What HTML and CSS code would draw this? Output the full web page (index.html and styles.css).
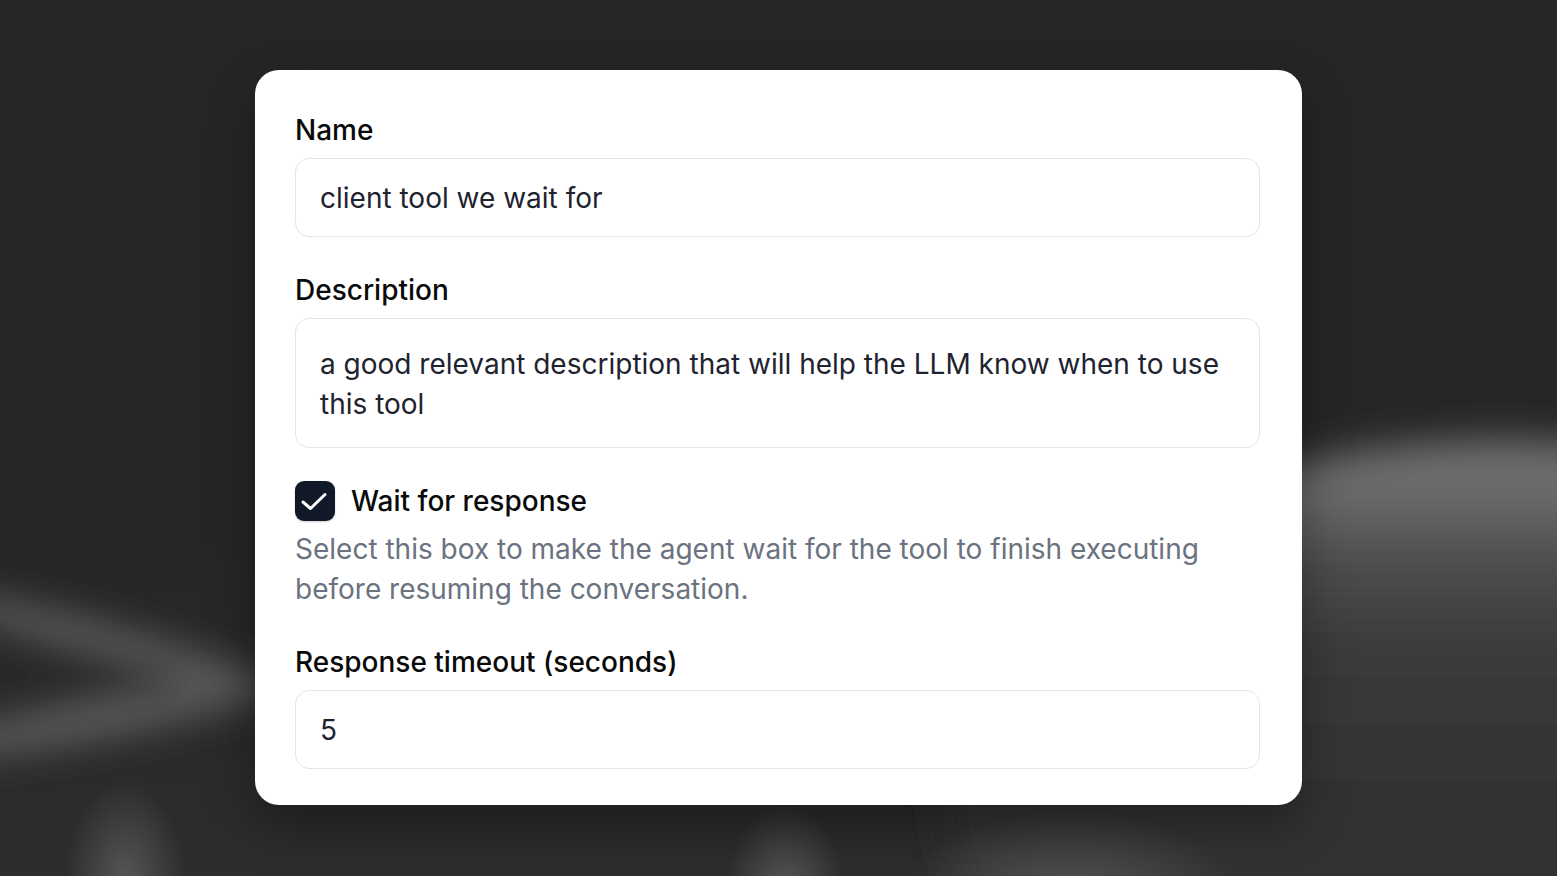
FILE: index.html
```html
<!DOCTYPE html>
<html lang="en">
<head>
<meta charset="utf-8">
<title>Client tool</title>
<link rel="stylesheet" href="styles.css">
</head>
<body>
<main class="stage">
  <form class="card">
    <div class="field">
      <label class="label">Name</label>
      <div class="input">client tool we wait for</div>
    </div>
    <div class="field">
      <label class="label">Description</label>
      <div class="input textarea">a good relevant description that will help the LLM know when to use this tool</div>
    </div>
    <div class="field check-field">
      <div class="check-row">
        <span class="checkbox">
          <svg viewBox="0 0 40 40" width="40" height="40"><polyline points="8,21 15.5,27.5 30,13.5" fill="none" stroke="#fff" stroke-width="3" stroke-linecap="round" stroke-linejoin="round"/></svg>
        </span>
        <span class="check-label">Wait for response</span>
      </div>
      <p class="help">Select this box to make the agent wait for the tool to finish executing before resuming the conversation.</p>
    </div>
    <div class="field">
      <label class="label">Response timeout (seconds)</label>
      <div class="input">5</div>
    </div>
  </form>
</main>
</body>
</html>
```

FILE: styles.css
```css
html, body {
  margin: 0;
  padding: 0;
}
body {
  width: 1557px;
  height: 876px;
  overflow: hidden;
  font-family: "Inter", "Noto Sans", sans-serif;
  background-color: #262626;
  background-repeat: no-repeat;
  background-image:
    radial-gradient(ellipse 60px 100px at 125px 880px, rgba(90,90,90,0.9), rgba(90,90,90,0) 100%),
    radial-gradient(ellipse 60px 90px at 785px 895px, rgba(92,92,92,0.9), rgba(92,92,92,0) 100%),
    radial-gradient(ellipse 170px 90px at 1070px 900px, rgba(88,88,88,0.9), rgba(88,88,88,0) 100%),
    url("data:image/svg+xml,%3Csvg xmlns='http://www.w3.org/2000/svg' width='1557' height='876'%3E%3Cdefs%3E%3Cfilter id='b' filterUnits='userSpaceOnUse' x='-300' y='-300' width='2200' height='1500'%3E%3CfeGaussianBlur stdDeviation='17'/%3E%3C/filter%3E%3Cfilter id='c' filterUnits='userSpaceOnUse' x='-300' y='-300' width='2200' height='1500'%3E%3CfeGaussianBlur stdDeviation='18'/%3E%3C/filter%3E%3ClinearGradient id='g' x1='0' y1='0' x2='0' y2='1'%3E%3Cstop offset='0' stop-color='%23707070'/%3E%3Cstop offset='0.08' stop-color='%236a6a6a'/%3E%3Cstop offset='0.18' stop-color='%234c4c4c'/%3E%3Cstop offset='0.3' stop-color='%233b3b3b'/%3E%3Cstop offset='0.5' stop-color='%23333333'/%3E%3Cstop offset='1' stop-color='%232e2e2e'/%3E%3C/linearGradient%3E%3C/defs%3E%3Cellipse cx='1500' cy='790' rx='560' ry='350' fill='url(%23g)' filter='url(%23c)'/%3E%3Cg filter='url(%23b)' fill='%23565656'%3E%3Cellipse cx='100' cy='640' rx='180' ry='18' transform='rotate(15 100 640)'/%3E%3Cellipse cx='100' cy='718' rx='180' ry='22' transform='rotate(-11 100 718)'/%3E%3C/g%3E%3C/svg%3E"),
    linear-gradient(180deg, #262626 0%, #262626 62%, #2d2d2d 100%);
}
.stage {
  padding: 70px 0 0 255px;
}
.card {
  box-sizing: border-box;
  width: 1047px;
  background: #fff;
  border-radius: 24px;
  padding: 40px 42px 36px 40px;
  display: flex;
  flex-direction: column;
  gap: 33px;
  box-shadow: 0 20px 50px rgba(0,0,0,0.35);
}
.field {
  display: flex;
  flex-direction: column;
  gap: 8px;
}
.label {
  font-size: 28px;
  line-height: 40px;
  font-weight: 500;
  color: #0a0a0a;
}
.input {
  box-sizing: border-box;
  height: 79px;
  border: 1.5px solid #e4e4e9;
  border-radius: 14px;
  padding: 19px 24px 17px;
  font-size: 28px;
  line-height: 40px;
  color: #1e2330;
  background: #fff;
}
.textarea {
  height: 130px;
  padding: 24.5px 24px 22.5px;
}
.check-row {
  display: flex;
  align-items: center;
  gap: 16px;
  height: 40px;
}
.checkbox {
  width: 40px;
  height: 40px;
  border-radius: 9px;
  background: #111827;
  display: block;
  box-shadow: 0 1px 2px rgba(0,0,0,0.2);
}
.checkbox svg {
  display: block;
}
.check-label {
  font-size: 28px;
  line-height: 40px;
  font-weight: 500;
  color: #0a0a0a;
}
.help {
  margin: 0;
  font-size: 28px;
  line-height: 40px;
  color: #6b7280;
}
```
